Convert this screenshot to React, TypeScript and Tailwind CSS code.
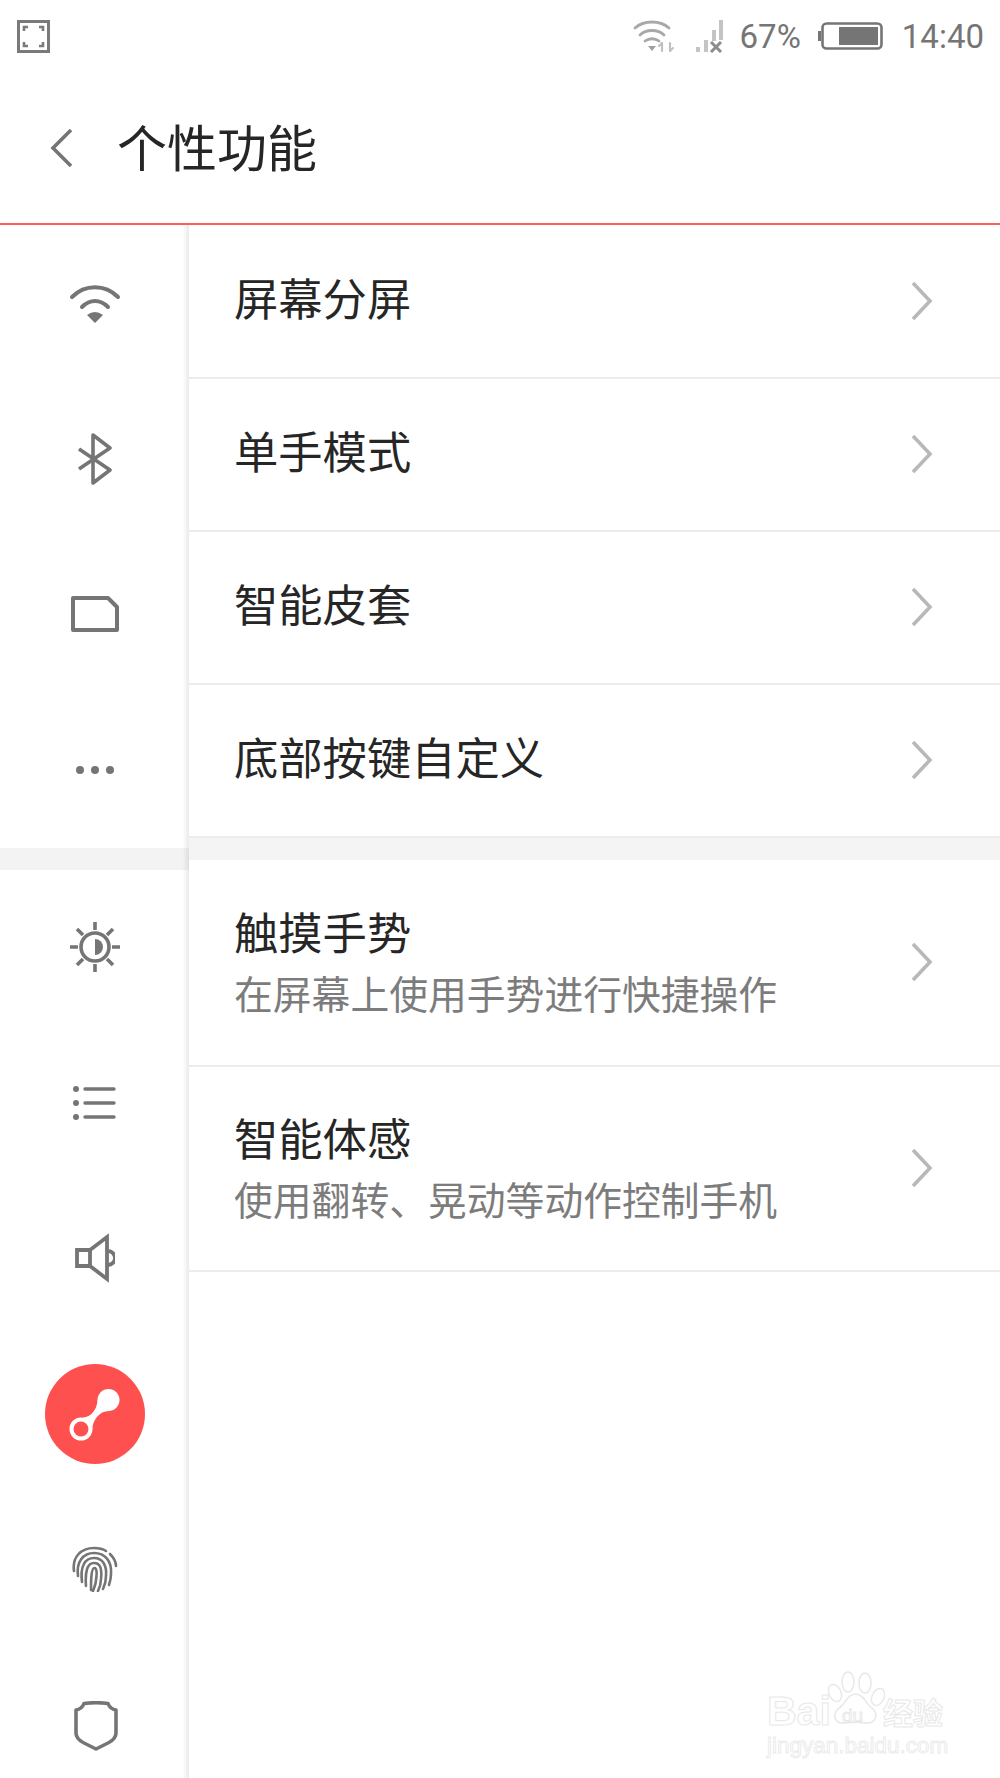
const CJK = "font-['Noto_Sans_CJK_SC','Noto_Sans',sans-serif]";

function Chevron() {
  return (
    <svg width="24" height="42" viewBox="0 0 24 42" fill="none" stroke="#b8b8b8" strokeWidth="3.6">
      <path d="M4 3 L21 21 L4 39" />
    </svg>
  );
}

function WifiIcon() {
  return (
    <svg width="52" height="42" viewBox="0 0 52 42" fill="none" stroke="#757575" strokeWidth="4" strokeLinecap="round">
      <path d="M3 15 C16 2 36 2 49 15" />
      <path d="M13 25 C21 17 31 17 39 25" />
      <path d="M18 33 Q26 27 34 33 L26 41 Z" fill="#757575" stroke="none" />
    </svg>
  );
}

function BluetoothIcon() {
  return (
    <svg width="36" height="52" viewBox="0 0 36 52" fill="none" stroke="#757575" strokeWidth="3.6" strokeLinejoin="round">
      <path d="M2 16 L33 37 L16 50 L16 2 L33 15 L2 36" />
    </svg>
  );
}

function SdIcon() {
  return (
    <svg width="48" height="36" viewBox="0 0 48 36" fill="none" stroke="#757575" strokeWidth="4" strokeLinejoin="round">
      <path d="M2 2 L37 2 L46 11 L46 34 L2 34 Z" />
    </svg>
  );
}

function DotsIcon() {
  return (
    <svg width="40" height="10" viewBox="0 0 40 10" fill="#757575">
      <circle cx="5" cy="5" r="4" />
      <circle cx="20" cy="5" r="4" />
      <circle cx="35" cy="5" r="4" />
    </svg>
  );
}

function BrightnessIcon() {
  return (
    <svg width="52" height="52" viewBox="0 0 52 52" fill="none" stroke="#757575" strokeWidth="3.6">
      <circle cx="26" cy="26" r="14" />
      <path d="M26 18 A8 8 0 0 1 26 34 Z" fill="#757575" stroke="none" />
      <path d="M26 1 V9 M26 43 V51 M1 26 H9 M43 26 H51 M8 8 L14 14 M38 38 L44 44 M44 8 L38 14 M14 38 L8 44" />
    </svg>
  );
}

function ListIcon() {
  return (
    <svg width="44" height="34" viewBox="0 0 44 34" fill="none" stroke="#757575" strokeWidth="3.4" strokeLinecap="round">
      <path d="M12 3 H41 M12 17 H41 M12 31 H41" />
      <circle cx="3" cy="3" r="3" fill="#757575" stroke="none" />
      <circle cx="3" cy="17" r="3" fill="#757575" stroke="none" />
      <circle cx="3" cy="31" r="3" fill="#757575" stroke="none" />
    </svg>
  );
}

function VolumeIcon() {
  return (
    <svg width="40" height="50" viewBox="0 0 40 50" fill="none" stroke="#757575" strokeWidth="3.8">
      <path d="M2 17 H15 V33 H2 Z" />
      <path d="M15 17 L32 4 V46 L15 33" />
      <path d="M33 18 A7 7 0 0 1 33 32" />
    </svg>
  );
}

function GestureIcon() {
  return (
    <svg width="100" height="100" viewBox="0 0 100 100">
      <circle cx="50" cy="50" r="50" fill="#ff5050" />
      <circle cx="63.500" cy="36" r="11" fill="#fff" />
      <circle cx="36" cy="65" r="11.500" fill="#fff" />
      <path d="M52.500 36 C52 46 46 53 38 53.500 L47 66 C48 56 54 47 64 47 Z" fill="#fff" />
      <circle cx="36" cy="65" r="7.500" fill="#ff5050" />
    </svg>
  );
}

function FingerprintIcon() {
  return (
    <svg width="46" height="46" viewBox="0 0 46 46" fill="none" stroke="#757575" strokeWidth="2.600" strokeLinecap="round">
      <path d="M2 25 C0 11 9 2 22 2 C27 2 31 3 34 5" />
      <path d="M38 8 C41 11 44 15 44 20" />
      <path d="M6 30 C4 16 11 7 22 7 C33 7 40 15 39 28 C39 32 38 36 37 39" />
      <path d="M10 36 C8 20 13 12 22 12 C31 12 35 20 34 30 C34 35 33 39 31 43" />
      <path d="M14 40 C13 26 15 17 22 17 C29 17 30 24 29 33 C29 37 28 41 26 45" />
      <path d="M19 44 C19 36 19 22 22.500 22 C25 22 25 28 24 34 C24 38 22 42 21 45" />
    </svg>
  );
}

function ShieldIcon() {
  return (
    <svg className="ml-[2px] mt-[2px]" width="44" height="50" viewBox="0 0 44 50" fill="none" stroke="#757575" strokeWidth="3.6" strokeLinejoin="round">
      <path d="M10 2.500 Q22 1 34 2.500 Q36 8 42 9 V32 Q42 38 34 42 L22 48 L10 42 Q2 38 2 32 V9 Q8 8 10 2.500 Z" />
    </svg>
  );
}

function RailItem({ children }: { children: React.ReactNode }) {
  return <div className="h-[155.5px] flex items-center justify-center">{children}</div>;
}

function SimpleRow({ title, height = "h-[153px]" }: { title: string; height?: string }) {
  return (
    <div className={`${height} flex items-center justify-between pl-[45px] pr-[67px] border-b-2 border-[#ececec]`}>
      <span className="text-[44.3px] leading-none text-[#262626] pb-[8px]">{title}</span>
      <Chevron />
    </div>
  );
}

function DetailRow({ title, sub, height }: { title: string; sub: string; height: string }) {
  return (
    <div className={`${height} flex items-center justify-between pl-[45px] pr-[67px] border-b-2 border-[#ececec]`}>
      <div className="flex flex-col gap-[19px] pb-[3px]">
        <span className="text-[44.3px] leading-none text-[#262626]">{title}</span>
        <span className="text-[38.8px] leading-none text-[#7c7c7c]">{sub}</span>
      </div>
      <Chevron />
    </div>
  );
}

function StatusBar() {
  return (
    <div className="h-[72px] flex items-center justify-between pl-[17px] pr-[16px]">
      <svg width="33" height="33" viewBox="0 0 33 33" fill="none" stroke="#7a7a7a">
        <rect x="1.500" y="1.500" width="30" height="30" strokeWidth="3" />
        <path d="M7 11 V7 H11 M22 7 H26 V11 M7 22 V26 H11 M26 22 V26 H22" strokeWidth="2.6" />
      </svg>
      <div className="flex items-center font-['Roboto',sans-serif] text-[33px] leading-none text-[#757575]">
        {/* wifi with activity arrows */}
        <svg width="42" height="34" viewBox="0 0 42 34" fill="none" stroke="#a8a8a8" strokeWidth="2.800" strokeLinecap="round">
          <path d="M2 9 C11 1 27 1 36 9" />
          <path d="M7 16 C13 10 25 10 31 16" />
          <path d="M12 22 C16 19 22 19 26 22" />
          <path d="M15 27 H23 L19 32 Z" fill="#a0a0a0" stroke="none" />
          <path d="M29 24 V32 M37 24 V32" stroke="#c0c0c0" strokeWidth="2.200" />
          <path d="M26 27 L29 24 M37 32 L40 29" stroke="#c0c0c0" strokeWidth="2" />
        </svg>
        {/* signal, no sim */}
        <svg className="ml-[21px]" width="28" height="34" viewBox="0 0 28 34" fill="none">
          <rect x="0" y="28" width="4" height="5" fill="#c4c4c4" />
          <rect x="8" y="21" width="4" height="12" fill="#c4c4c4" />
          <rect x="16" y="11" width="4" height="11" fill="#c4c4c4" />
          <rect x="23" y="1" width="4" height="20" fill="#c4c4c4" />
          <path d="M15 23 L25 33 M25 23 L15 33" stroke="#8c8c8c" strokeWidth="3" />
        </svg>
        <span className="ml-[16px]">67%</span>
        {/* battery */}
        <svg className="ml-[17px]" width="65" height="28" viewBox="0 0 65 28" fill="none">
          <rect x="0" y="9" width="3" height="10" fill="#757575" />
          <rect x="4.500" y="1.500" width="59" height="25" rx="4" stroke="#757575" strokeWidth="2.600" />
          <rect x="21" y="5" width="39" height="18" fill="#757575" />
        </svg>
        <span className="ml-[19px]">14:40</span>
      </div>
    </div>
  );
}

function Watermark() {
  return (
    <div className="absolute left-[767px] top-[1670px] w-[190px] h-[96px] pointer-events-none">
      <span className="absolute left-[0px] top-[21px] text-[41px] leading-none font-bold text-white font-['Liberation_Sans',sans-serif] [-webkit-text-stroke:1px_#e8e8e8]">
        Bai
      </span>
      <svg className="absolute left-[56px] top-0" width="62" height="62" viewBox="0 0 62 62" fill="#fff" stroke="#e8e8e8" strokeWidth="1.500">
        <ellipse cx="12" cy="23" rx="6" ry="9" transform="rotate(-25 12 23)" />
        <ellipse cx="25" cy="12" rx="6" ry="10" />
        <ellipse cx="42" cy="13" rx="6" ry="10" />
        <ellipse cx="55" cy="27" rx="6" ry="9" transform="rotate(25 55 27)" />
        <path d="M33 24 C41 24 43 35 50 39 C56 45 52 54 43 53 C36 52 28 52 21 53 C12 54 9 45 15 39 C22 35 24 24 33 24 Z" />
      </svg>
      <span className="absolute left-[75px] top-[36px] text-[19px] leading-none text-white font-['Liberation_Sans',sans-serif] [-webkit-text-stroke:1px_#e8e8e8]">
        du
      </span>
      <span className="absolute left-[116px] top-[26px] text-[30px] leading-none font-bold text-white font-['Noto_Sans_CJK_SC',sans-serif] [-webkit-text-stroke:1px_#e8e8e8]">
        经验
      </span>
      <span className="absolute left-[0px] top-[65px] text-[22.500px] leading-none text-white font-['Liberation_Sans',sans-serif] [-webkit-text-stroke:1px_#ececec]">
        jingyan.baidu.com
      </span>
    </div>
  );
}

export default function App() {
  return (
    <div className={`relative w-[1000px] h-[1778px] overflow-hidden bg-white ${CJK}`}>
      <StatusBar />
      <div className="h-[153px] flex items-center border-b-2 border-[#ff5c5c]">
        <svg className="ml-[50px]" width="24" height="40" viewBox="0 0 24 40" fill="none" stroke="#757575" strokeWidth="3.6">
          <path d="M21 2 L3 20 L21 38" />
        </svg>
        <span className="ml-[43px] text-[50px] leading-none text-[#262626] pb-[5px]">个性功能</span>
      </div>

      <div className="flex h-[1553px]">
        <div className="w-[189px] shrink-0 bg-white pt-[0.5px] shadow-[inset_-6px_0_5px_-3px_rgba(0,0,0,0.09)]">
          <RailItem><WifiIcon /></RailItem>
          <RailItem><BluetoothIcon /></RailItem>
          <RailItem><SdIcon /></RailItem>
          <RailItem><DotsIcon /></RailItem>
          <div className="h-[22px] bg-[#f3f3f3] shadow-[inset_-6px_0_5px_-3px_rgba(0,0,0,0.09)]" />
          <RailItem><BrightnessIcon /></RailItem>
          <RailItem><ListIcon /></RailItem>
          <RailItem><VolumeIcon /></RailItem>
          <RailItem><GestureIcon /></RailItem>
          <RailItem><FingerprintIcon /></RailItem>
          <RailItem><ShieldIcon /></RailItem>
        </div>

        <div className="flex-1">
          <SimpleRow title="屏幕分屏" height="h-[153.5px]" />
          <SimpleRow title="单手模式" />
          <SimpleRow title="智能皮套" />
          <SimpleRow title="底部按键自定义" />
          <div className="h-[22px] bg-[#f4f4f4]" />
          <DetailRow title="触摸手势" sub="在屏幕上使用手势进行快捷操作" height="h-[207px]" />
          <DetailRow title="智能体感" sub="使用翻转、晃动等动作控制手机" height="h-[205px]" />
        </div>
      </div>

      <Watermark />
    </div>
  );
}
